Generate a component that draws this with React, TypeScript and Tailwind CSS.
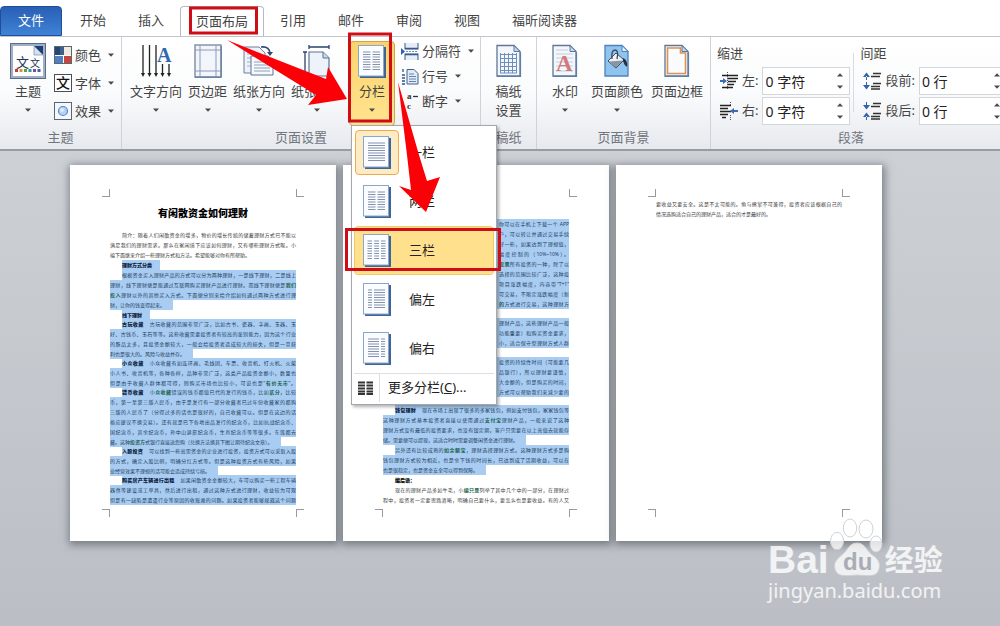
import { Fragment, type ReactNode } from 'react';

const FONT = "font-['Noto_Sans','Noto_Sans_CJK_SC',sans-serif]";

interface Para {
  lead?: string;
  lines: string[];
  plain?: boolean;
  flush?: boolean; // no first line indent
  runsOn?: boolean; // last line is full width too
}

// ~text~ marks words flagged by the grammar check
const pageOne: Para[] = [
  {
    plain: true,
    lines: [
      '简介：随着人们闲散资金的增多，物价的增长传统的储蓄理财方式已不能以',
      '满足我们的理财需求。那么在家闲境下应该如何理财，又有哪些理财方式呢。小',
      '编下面继来介绍一些理财方式和方法。希望能够对你有所帮助。',
    ],
  },
  { lead: '理财方式分类', lines: [''] },
  {
    lines: [
      '根据资金买入理财产品的方式可以分为两种理财，一是线下理财，二是线上',
      '理财，线下理财便是能通过互联网购买理财产品进行理财。而线下理财便是~我们~',
      '~投入~理财以外的其他买入方式。下面便分别来给介绍如何通过两种方式进行理',
      '财，让你的钱变得起来。',
    ],
  },
  { lead: '线下理财', lines: [''] },
  {
    lead: '古玩收藏',
    lines: [
      '古玩收藏的范围非常广泛，比如古书、瓷器、字画、玉器、玉',
      '好、古钱币、玉石等等。这些收藏需要投资者有较高的鉴别能力，因为这个行业',
      '的赝品太多，且投资金额较大，一般会给投资者造成较大的损失，但是一旦获',
      '利也是很大的。风险与收益并存。',
    ],
  },
  {
    lead: '小众收藏',
    lines: [
      '小众收藏有如连环画、毛线团、车票、收音机、打火机、火柴',
      '小人书、收音机等，各种各样，品种非常广泛，这类产品投资金额小，数量也',
      '但是由于收藏人群体都可得，则购买市场也比较小，可说也是“~有价无市~”。',
    ],
    runsOn: true,
  },
  {
    lead: '错币收藏',
    lines: [
      '小~众收藏~错误的钱币都值已代的发行的钱币，比如~贰分~，比较',
      '币，第一至第三版人民币，由于是发行有一部分收藏者已过年份收藏家的都购',
      '三版的人民币了（分得过多的话也是很好的，自己收藏可以。但是在这边的话',
      '格应建议不换交易）。还有就是已下各地出品发行的纪念币，比如抗战纪念币、',
      '国纪念币，其余纪念币，孙中山诞辰纪念币，生肖纪念币等等很多。东莲都去',
      '藏。这种~投资方~式银行直接送您购（兑换方法换其下图让期待纪念文章）。',
    ],
  },
  {
    lead: '入股投资',
    lines: [
      '可以找到一些高需资金的企业进行投资，投资方式可以采取入股',
      '的方式，确定入股比例，明确分红方式等。但是这种投资方式有些风险，如果',
      '业经营效果不理想的话可能会造成持续亏损。',
    ],
  },
  {
    lead: '购买房产车辆进行出租',
    lines: [
      '如果闲散资金金额较大，车可以购买一些工程车辆',
      '器然等建设或工单具，然后进行出租，通过这种方式进行理财，收益较为可观',
      '但是有一缺陷是遭遇行业等原因的收账难的问题。如果投资者能够规避这个问题',
    ],
    runsOn: true,
  },
];

// the open menu covers the left part of these lines; '' is an empty line
const pageTwoTop = [
  '你可以在手机上下载一个 APP',
  '户，可以转让并通过交易手续',
  '好一些，如果达到了理想值，',
  '幅度控制的（10%~10%）。',
  '~股票~所有投资的一种，除了以',
  '选择的范围比较广泛，这种投',
  '项目涨跌幅度，内容带“T+1”',
  '可交易，不限定涨跌幅度（新',
  '~的~方式进行交易，这种理财方',
  '',
  '理财产品，这些理财产品一般',
  '功能重要）和购买资金要求，',
  '小，适合保守型理财方式人群',
  '',
  '投资的持续性时间（可能要几',
  '品银行），所以理财要谨慎，',
  '大金额的，但是购买的时间，',
  '方式可以帮助我们来减少要的',
];

const pageTwo: Para[] = [
  {
    lead: '钱包理财',
    lines: [
      '现在市场上出现了很多的多家钱包，例如支付钱包，家家钱包等',
      '这种理财方式基本投资者直接以使用通过~支付宝~理财产品，一般来说了这种',
      '理财方式没有最低的投资要求，也没有锁定期，客户只需要在以上充值去就能存',
      '储。需要便可以提现，这适合时时需要调整闲资金进行理财。',
    ],
  },
  {
    lines: [
      '另外还有比较成熟的~如余额宝~，理财选择理财方式。这种理财方式多是购',
      '钱包理财方式较为相近，也是余下钱的时间长，已达到成了活期收益，可以在',
      '也是很稳定，也是资金安全可以得到保障。',
    ],
  },
  { plain: true, lead: '编后语：', lines: [''] },
  {
    plain: true,
    lines: [
      '现在的理财产品多如牛毛，小~编只是~列举了其中几个中的一部分，在理财过',
      '程中，投资者一定要思路清晰，明确自己要什么，要怎么也是要收益。有的人又',
    ],
    runsOn: true,
  },
];

const pageThree: Para[] = [
  {
    plain: true,
    flush: true,
    lines: [
      '要收益又要安全。这是不太可能的。鱼与熊掌不可兼得，投资者应该根据自己的',
      '情况选购适合自己的理财产品，适合的才是最好的。',
    ],
  },
];

function Marked({ text }: { text: string }) {
  return (
    <>
      {text.split('~').map((part, i) =>
        i % 2 ? (
          <span key={i} className="font-bold text-[#17614f]">{part}</span>
        ) : (
          <Fragment key={i}>{part}</Fragment>
        ),
      )}
    </>
  );
}

function Paragraph({ para }: { para: Para }) {
  return (
    <div className={para.lead && para.lines[0] ? '-mt-px' : ''}>
      {para.lines.map((line, i) => {
        const full = i < para.lines.length - 1 || para.runsOn;
        return (
          <p
            key={i}
            className={`h-[10px] whitespace-nowrap ${para.plain ? 'text-[#3a3a3a]' : 'bg-[#a9cdf2] text-[#233c5c]'} ${
              full ? '[text-align-last:justify]' : 'w-fit pr-2'
            } ${i === 0 && !para.flush ? 'ml-3' : ''}`}
          >
            {i === 0 && para.lead && (
              <b className={`font-black ${para.plain ? 'text-black' : 'text-[#0d2340]'} ${line ? 'mr-1.5' : ''}`}>
                {para.lead}
              </b>
            )}
            <Marked text={line} />
          </p>
        );
      })}
    </div>
  );
}

function CoveredLines({ lines }: { lines: string[] }) {
  return (
    <div className="pb-[9px]">
      {lines.map((line, i) => (
        <p key={i} className={line ? 'flex h-[10px] justify-end bg-[#a9cdf2] text-[#233c5c]' : 'h-[9px]'}>
          {line && (
            <span className="block w-[70px] whitespace-nowrap [text-align-last:justify]">
              {line.includes('%') ? line : <Marked text={line} />}
            </span>
          )}
        </p>
      ))}
    </div>
  );
}

function Page({ title, paras, covered, className }: { title?: string; paras: Para[]; covered?: string[]; className: string }) {
  return (
    <article className="flex h-[376px] w-[266px] shrink-0 flex-col bg-white px-8 py-6 shadow-[1px_2px_8px_2px_rgba(70,76,84,0.6)]">
      <div className="flex justify-between">
        <i className="size-2 border-r border-b border-[#9a9a9a]" />
        <i className="size-2 border-b border-l border-[#9a9a9a]" />
      </div>
      <div className={`flex-1 px-2 text-[5px] leading-[10px] ${className}`}>
        {title && <h1 className="mb-[9px] text-center text-[10px] leading-4 font-black text-black">{title}</h1>}
        {covered && <CoveredLines lines={covered} />}
        {paras.map((para, i) => (
          <Paragraph key={i} para={para} />
        ))}
      </div>
      <div className="flex justify-between">
        <i className="size-2 border-t border-r border-[#9a9a9a]" />
        <i className="size-2 border-t border-l border-[#9a9a9a]" />
      </div>
    </article>
  );
}

/* ---------- icons ---------- */

function Sheet({ children, stroke = '#5f7796' }: { children?: ReactNode; stroke?: string }) {
  return (
    <svg width="28" height="34" viewBox="0 0 28 34">
      <path d="M2 1.5h17l6 6v24.500h-23z" fill="#f3f7fd" stroke={stroke} strokeWidth="1.300" />
      {children}
      <path d="M19 1.500v6h6z" fill="#c5d8f0" stroke={stroke} />
      <path d="M2 32.500h23.500v-24" fill="none" stroke="#5d7fa8" strokeWidth="1.200" />
    </svg>
  );
}

function ThemeIcon() {
  return (
    <svg width="36" height="36" viewBox="0 0 36 36">
      <rect x=".5" y=".5" width="35" height="35" fill="#9fb0c6" stroke="#5a6c88" />
      <path d="M3 3h21l9 9v21H3z" fill="#fdfdfe" />
      <path d="M24 3h9v9z" fill="#1d3f74" />
      <path d="M24 3v9h9z" fill="#d6e0ee" stroke="#6b80a3" strokeWidth=".6" />
      <text x="6" y="24" fontSize="13" fill="#23364f">文</text>
      <text x="20" y="24" fontSize="10" fill="#23364f">文</text>
      {['#c23b3b', '#d99530', '#5fa046', '#3c8f9e', '#7450a0', '#3a62a8'].map((c, i) => (
        <rect key={c} x={5 + i * 4.500} y="26" width="3" height="3" fill={c} />
      ))}
    </svg>
  );
}

function ColorsIcon() {
  return (
    <svg width="18" height="18" viewBox="0 0 18 18">
      <rect x=".5" y=".5" width="17" height="17" fill="#fff" stroke="#5b6673" />
      <rect x="1" y="1" width="5" height="8" fill="#27466f" />
      <rect x="6" y="1" width="4" height="8" fill="#3d6290" />
      <rect x="10" y="1" width="7" height="8" fill="#efebdf" />
      <rect x="1" y="10" width="8" height="7" fill="#5080c0" />
      <rect x="10" y="10" width="7" height="7" fill="#c8443c" />
    </svg>
  );
}

function FontsIcon() {
  return (
    <svg width="18" height="18" viewBox="0 0 18 18">
      <rect x=".5" y=".5" width="17" height="17" fill="#fff" stroke="#4a4f57" />
      <text x="2" y="14" fontSize="14" fontWeight="500" fill="#111">文</text>
    </svg>
  );
}

function EffectsIcon() {
  return (
    <svg width="18" height="18" viewBox="0 0 18 18">
      <rect x=".5" y=".5" width="17" height="17" fill="#f4f7fb" stroke="#5b6673" />
      <circle cx="9" cy="9" r="4.500" fill="#b4d2f6" stroke="#5c86c4" strokeWidth="1.200" />
      <circle cx="8" cy="8" r="2" fill="#dcebfd" />
    </svg>
  );
}

function TextDirectionIcon() {
  return (
    <svg width="34" height="34" viewBox="0 0 34 34">
      <path d="M4 1v30M10.500 1v30M17 1v30M23.500 20v11M30 20v11" stroke="#222" strokeWidth="1.300" />
      <path d="M2 29h4l-2 4zM8.500 29h4l-2 4zM15 29h4l-2 4zM21.500 29h4l-2 4zM28 29h4l-2 4z" fill="#222" />
      <text x="18" y="18" fontSize="20" fontWeight="700" fill="#2f67b1" className="font-['Liberation_Serif',serif]">A</text>
    </svg>
  );
}

function MarginsIcon() {
  return (
    <svg width="28" height="34" viewBox="0 0 28 34">
      <rect x="1" y="1" width="26" height="32" fill="#f2f6fc" stroke="#72839a" strokeWidth="1.300" />
      <path d="M6 1v32M22 1v32M1 6h26M1 27h26" stroke="#8c9cb2" />
      <path d="M1 33.200h26.200V2" fill="none" stroke="#58749a" />
    </svg>
  );
}

function OrientationIcon() {
  return (
    <svg width="32" height="34" viewBox="0 0 32 34">
      <path d="M1 3h15l6 6v20H1z" fill="#eef3fb" stroke="#6d7f99" />
      <path d="M4 10h6M4 14h4M4 18h4M4 22h4" stroke="#a4b0c2" />
      <path d="M8 12h17l5 5v14H8z" fill="#f6f9fe" stroke="#5e7391" />
      <path d="M11 18h16M11 21h16M11 24h16M11 27h16" stroke="#8fa0b8" />
      <path d="M18 3q8-1 9 6" fill="none" stroke="#2e4a77" strokeWidth="1.500" />
      <path d="M24 8h6l-3 4z" fill="#2e4a77" />
    </svg>
  );
}

function PaperSizeIcon() {
  return (
    <svg width="30" height="34" viewBox="0 0 30 34">
      <path d="M7 8h14l6 6v18H7z" fill="#eef3fb" stroke="#5e7391" strokeWidth="1.200" />
      <path d="M21 8v6h6" fill="#c9d8ee" stroke="#5e7391" />
      <path d="M7 3h20M7 1v4M27 1v4M3 8v24M1 8h4M1 32h4" stroke="#2d4470" strokeWidth="1.300" />
    </svg>
  );
}

const columnLayouts: Record<string, [number, number][]> = {
  one: [[5, 22]],
  two: [[5, 12.500], [14.500, 22]],
  three: [[4.500, 9], [11.200, 16], [18, 22.500]],
  left: [[5, 9], [11, 22]],
  right: [[5, 16], [18, 22]],
};

function ColumnsIcon({ layout }: { layout: string }) {
  return (
    <svg width="28" height="33" viewBox="0 0 28 33">
      <rect x="2" y="2" width="26" height="31" fill="#3e6595" />
      <rect x=".5" y=".5" width="25" height="30.500" fill="#fafcff" stroke="#8aa6cb" />
      {columnLayouts[layout].map(([from, to]) => (
        <path
          key={from}
          d={[7, 9.500, 12, 14.500, 17, 19.500, 22, 24.500].map((y) => `M${from} ${y}H${to}`).join('')}
          stroke="#8492ad"
          strokeWidth="1.200"
        />
      ))}
    </svg>
  );
}

function BreaksIcon() {
  return (
    <svg width="18" height="17" viewBox="0 0 18 17">
      <path d="M4 0v6h13V0M4 17v-6h13v6" fill="#e4edf8" stroke="#5676a0" strokeWidth="1.200" />
      <path d="M4 5.500h13M4 11.500h13" stroke="#375a8b" strokeWidth="1.500" />
      <path d="M0 5l4 3.500L0 12z" fill="#2b62b3" />
      <path d="M5 8.500h12" stroke="#7d8ea6" strokeDasharray="2 1" />
    </svg>
  );
}

function LineNumbersIcon() {
  return (
    <svg width="18" height="17" viewBox="0 0 18 17">
      <path d="M6 1.500h7l4 4V16H6z" fill="#dfeaf8" stroke="#42618c" />
      <path d="M8 6h5M8 8.500h7M8 11h7M8 13.500h7" stroke="#6a84a8" />
      <path d="M2 1v3M1 7h3M1 10h3M1 13h3M1 16h3" stroke="#27548f" strokeWidth="1.300" />
    </svg>
  );
}

function HyphenIcon() {
  return (
    <svg width="18" height="20" viewBox="0 0 18 20" fontSize="9" fontWeight="700" fill="#333" className="font-['Liberation_Serif',serif]">
      <text x="6" y="8">a</text>
      <text x="6" y="18">c</text>
      <path d="M12 5.500h5" stroke="#333" strokeWidth="1.300" />
    </svg>
  );
}

function GridPaperIcon() {
  return (
    <Sheet>
      <path d="M5 10.500h17M5 14.500h17M5 18.500h17M5 22.500h17M5 26.500h17M5 29h17M5.500 9v20M9.500 9v20M13.500 9v20M17.500 9v20M21.500 9v20" stroke="#6f8fbb" />
    </Sheet>
  );
}

function WatermarkIcon() {
  return (
    <Sheet>
      <path d="M5 6h12M5 10h17M5 14h17M5 18h17M5 22h17M5 27h17" stroke="#c5ccd8" />
      <text x="5" y="27" fontSize="23" fontWeight="700" fill="#cf7b7b" className="font-['Liberation_Serif',serif]">A</text>
    </Sheet>
  );
}

function PageColorIcon() {
  return (
    <svg width="28" height="34" viewBox="0 0 28 34">
      <path d="M2 1.500h17l6 6v24.500H2z" fill="#8fc3f0" stroke="#4d82bb" strokeWidth="1.300" />
      <path d="M19 1.500v6h6z" fill="#e4f0fb" stroke="#4d82bb" />
      <path d="M13 9l8 7-8 8-8-7z" fill="#eef1f5" stroke="#3c4a5c" />
      <path d="M6 17.500l14-1-7 7z" fill="#8a95a2" />
      <path d="M20 14q5 2 4 9-3-2-4-6z" fill="#25303e" />
      <path d="M9 15q-1-9 3-9t2 9" fill="none" stroke="#3c4a5c" strokeWidth="1.300" />
    </svg>
  );
}

function PageBorderIcon() {
  return (
    <Sheet>
      <path d="M4.500 4h13v5h5v20.500h-18z" fill="#f9fbff" stroke="#dc9452" strokeWidth="1.600" />
    </Sheet>
  );
}

function IndentIcon({ right = false }: { right?: boolean }) {
  return (
    <svg width="18" height="18" viewBox="0 0 18 18">
      {right ? (
        <>
          <path d="M0 3.500h11M0 6.500h8M0 9.500h11M0 12.500h8M2 15.500h4" stroke="#222" strokeWidth="1.500" />
          <path d="M10 9l4-3v2h4v2h-4v2z" fill="#3b6bb5" />
          <path d="M10.500 0v4M10.500 13v5" stroke="#555" strokeDasharray="1 1" />
        </>
      ) : (
        <>
          <path d="M2 3.500h16M7 6.500h11M8 9.500h8M7 12.500h7M2 15.500h11" stroke="#222" strokeWidth="1.500" />
          <path d="M7 9L3 6v2H0v2h3v2z" fill="#3b6bb5" />
          <path d="M7.500 0v18" stroke="#555" strokeDasharray="1 1" />
        </>
      )}
    </svg>
  );
}

function SpacingIcon({ after = false }: { after?: boolean }) {
  return (
    <svg width="18" height="18" viewBox="0 0 18 18">
      <path d="M10 1.500h8M8 4.500h9M10 11.500h8M8 14.500h9M8 17h9" stroke="#333" strokeWidth="1.500" />
      <path d={after ? 'M0 3h7L3.500 7.500zM3 0h1v4H3zM0 15h7l-3.500-4.500zM3 14h1v4H3z' : 'M0 5h7L3.500.5zM3 4h1v4H3zM0 13h7l-3.500 4.500zM3 10h1v4H3z'} fill="#2f62b0" />
    </svg>
  );
}

function Caret({ up = false }: { up?: boolean }) {
  return (
    <svg width="6" height="4" viewBox="0 0 6 4" className="shrink-0">
      <path d={up ? 'M0 3.500h6L3 .2z' : 'M0 .5h6L3 3.800z'} fill="#4a4a4a" />
    </svg>
  );
}

/* ---------- ribbon ---------- */

function BigButton({ icon, label, second, caret = true }: { icon: ReactNode; label: string; second?: string; caret?: boolean }) {
  return (
    <button className="flex shrink-0 flex-col items-center whitespace-nowrap">
      <span className="flex h-9 items-center">{icon}</span>
      <span className="mt-[3px] leading-[18px]">{label}</span>
      {second && <span className="leading-5">{second}</span>}
      {caret && (
        <span className="flex h-5 items-center">
          <Caret />
        </span>
      )}
    </button>
  );
}

function SmallButton({ icon, label }: { icon: ReactNode; label: string }) {
  return (
    <button className="flex items-center gap-[3px] whitespace-nowrap">
      {icon}
      <span className="leading-5">{label}</span>
      <span className="pl-1">
        <Caret />
      </span>
    </button>
  );
}

function Group({ label, className, children }: { label: string; className: string; children: ReactNode }) {
  return (
    <section className={`flex shrink-0 flex-col ${className}`}>
      <div className="flex flex-1">{children}</div>
      <h2 className="pb-[3px] text-center leading-[18px] text-[#71757c]">{label}</h2>
    </section>
  );
}

function SpinField({ id, icon, label, value }: { id: string; icon: ReactNode; label: string; value: string }) {
  return (
    <div className="flex h-7 items-center pl-[3px]">
      {icon}
      <label htmlFor={id} className="px-1 whitespace-nowrap">{label}</label>
      <div className="flex h-7 w-[88px] items-center border border-[#d3d6da] bg-white pr-1.5">
        <input id={id} defaultValue={value} className="w-full min-w-0 pl-0.5 text-[14px] text-[#222] outline-none" />
        <div className="flex flex-col gap-2">
          <button aria-label={`${label} +`} className="flex h-1"><Caret up /></button>
          <button aria-label={`${label} -`} className="flex h-1"><Caret /></button>
        </div>
      </div>
    </div>
  );
}

const columnItems = [
  { layout: 'one', label: '一栏' },
  { layout: 'two', label: '两栏' },
  { layout: 'three', label: '三栏' },
  { layout: 'left', label: '偏左' },
  { layout: 'right', label: '偏右' },
];

function ColumnsMenu() {
  return (
    <div className="absolute top-full left-px w-[146px] border border-[#a3a8af] bg-white p-0.5 text-[#222] shadow-[2px_2px_3px_rgba(0,0,0,0.3)]">
      {columnItems.map(({ layout, label }) => (
        <button
          key={layout}
          className={`flex h-[49px] w-full items-center gap-[10px] rounded-sm border ${
            layout === 'three' ? 'border-[#f3c865] bg-[#ffe18d]' : 'border-transparent'
          }`}
        >
          <span
            className={`flex h-[45px] w-[44px] items-center justify-center rounded-sm border ${
              layout === 'one' ? 'border-[#efaa4e] bg-[#fcebc3]' : 'border-transparent'
            }`}
          >
            <ColumnsIcon layout={layout} />
          </span>
          {label}
        </button>
      ))}
      <button className="flex h-[29px] w-full items-center border-t border-[#dcdfe3]">
        <svg width="15" height="14" viewBox="0 0 15 14" className="mr-1.5 ml-1">
          <path d="M0 1.500h7M0 4.500h7M0 7.500h7M0 10.500h7M0 13h7M8.500 1.500H15M8.500 4.500H15M8.500 7.500H15M8.500 10.500H15M8.500 13H15" stroke="#333" strokeWidth="2" />
        </svg>
        <span className="flex h-full items-center border-l border-[#dcdfe3] pl-2">
          更多分栏(<u>C</u>)...
        </span>
      </button>
    </div>
  );
}

const tabs = ['开始', '插入', '页面布局', '引用', '邮件', '审阅', '视图', '福昕阅读器'];

function Tabs() {
  return (
    <nav className="flex h-[37px] items-end border-b border-[#c2c6cc] bg-white">
      <button className="h-[30px] w-[62px] rounded-t border border-[#1f4f9c] bg-linear-to-b from-[#2a5fb4] to-[#3f83d6] text-white">文件</button>
      <div className="flex pl-0.5">
        {tabs.map((tab) => (
          <button
            key={tab}
            className={`h-[30px] whitespace-nowrap text-[#444] ${
              tab === '页面布局' ? '-mb-px rounded-t border border-b-0 border-[#b4bac3] bg-white px-[15px]' : 'px-4'
            }`}
          >
            {tab}
          </button>
        ))}
      </div>
    </nav>
  );
}

function Ribbon() {
  return (
    <div className="relative z-10 flex h-[114px] border-b-2 border-[#979ca4] bg-linear-to-b from-white via-[#fafbfc] to-[#e6e9ee] text-[#444]">
      <Group label="主题" className="w-[122px] border-r border-[#cfd3d9]">
        <div className="flex gap-2 pt-1.5 pl-2.5">
          <BigButton icon={<ThemeIcon />} label="主题" />
          <div className="flex h-[78px] flex-col justify-between pt-0.5">
            <SmallButton icon={<ColorsIcon />} label="颜色" />
            <SmallButton icon={<FontsIcon />} label="字体" />
            <SmallButton icon={<EffectsIcon />} label="效果" />
          </div>
        </div>
      </Group>
      <Group label="页面设置" className="w-[359px] border-r border-[#cfd3d9]">
        <div className="flex gap-1.5 pl-2">
          <div className="flex gap-1.5 pt-1.5">
            <BigButton icon={<TextDirectionIcon />} label="文字方向" />
            <BigButton icon={<MarginsIcon />} label="页边距" />
            <BigButton icon={<OrientationIcon />} label="纸张方向" />
            <BigButton icon={<PaperSizeIcon />} label="纸张大小" />
          </div>
          <div className="relative mt-1 flex h-[85px] w-[46px] justify-center rounded-sm border border-[#cfa64a] bg-linear-to-b from-[#fbd36c] to-[#ffe48f] pt-px">
            <BigButton icon={<ColumnsIcon layout="two" />} label="分栏" />
            <ColumnsMenu />
          </div>
          <div className="mt-1 flex h-[70px] flex-col justify-between">
            <SmallButton icon={<BreaksIcon />} label="分隔符" />
            <SmallButton icon={<LineNumbersIcon />} label="行号" />
            <SmallButton icon={<HyphenIcon />} label="断字" />
          </div>
        </div>
      </Group>
      <Group label="稿纸" className="w-[56px] border-r border-[#cfd3d9]">
        <div className="flex w-full justify-center pt-1.5">
          <BigButton icon={<GridPaperIcon />} label="稿纸" second="设置" caret={false} />
        </div>
      </Group>
      <Group label="页面背景" className="w-[174px] border-r border-[#cfd3d9]">
        <div className="flex w-full justify-end gap-2 pt-1.5 pr-[7px]">
          <div className="pr-1">
            <BigButton icon={<WatermarkIcon />} label="水印" />
          </div>
          <BigButton icon={<PageColorIcon />} label="页面颜色" />
          <BigButton icon={<PageBorderIcon />} label="页面边框" caret={false} />
        </div>
      </Group>
      <Group label="段落" className="w-[280px]">
        <div className="flex flex-col gap-0.5 pt-1 pr-[3px] pl-1.5">
          <h3 className="leading-6">缩进</h3>
          <SpinField id="indent-left" icon={<IndentIcon />} label="左:" value="0 字符" />
          <SpinField id="indent-right" icon={<IndentIcon right />} label="右:" value="0 字符" />
        </div>
        <div className="my-4 border-l border-[#d8dbe0]" />
        <div className="flex flex-col gap-0.5 pt-1 pl-1.5">
          <h3 className="leading-6">间距</h3>
          <SpinField id="space-before" icon={<SpacingIcon />} label="段前:" value="0 行" />
          <SpinField id="space-after" icon={<SpacingIcon after />} label="段后:" value="0 行" />
        </div>
      </Group>
    </div>
  );
}

/* ---------- overlays ---------- */

function Annotations() {
  return (
    <svg width="1000" height="626" viewBox="0 0 1000 626" className="pointer-events-none absolute top-0 left-0 z-20">
      <g fill="none" stroke="#cf0d16" strokeWidth="3">
        <rect x="190.500" y="8" width="66" height="25" />
        <rect x="349.500" y="34" width="41" height="87" />
        <rect x="346.500" y="229.500" width="153" height="40" />
      </g>
      <g fill="#fb0007">
        <path d="M227 40L326 79L328 67L347 99L308 105L316 95Z" />
        <path d="M398 82L419 155L427 181L440 177L426 212L399 186L411 190L407 155Z" />
      </g>
    </svg>
  );
}

function BaiduMark() {
  return (
    <div className="pointer-events-none absolute top-[518px] left-[768px] z-20 text-white/80">
      <div className="flex items-end">
        <span className="font-['Liberation_Sans',sans-serif] text-[39px] leading-9 font-bold">Bai</span>
        <svg width="56" height="60" viewBox="0 0 56 60">
          <g fill="#fff" fillOpacity=".75" stroke="#cfd1d4" strokeWidth="1">
            <ellipse cx="8" cy="23" rx="6.500" ry="8.700" />
            <ellipse cx="21" cy="10" rx="6.700" ry="9" />
            <ellipse cx="37" cy="11" rx="7" ry="9" />
            <ellipse cx="47" cy="26" rx="6" ry="8" />
            <path d="M28 25C35 25 37 31 42 36C48 40 52 44 50 51C48 59 41 58 28 57C16 58 8 59 6 51C4 44 9 40 14 36C19 31 21 25 28 25Z" />
          </g>
          <text x="14" y="52" fontSize="24" fontWeight="700" fill="#a9adb3" className="font-['Liberation_Sans',sans-serif]">du</text>
        </svg>
        <span className="text-[29px] leading-9 font-bold">经验</span>
      </div>
      <div className="font-['Noto_Sans',sans-serif] text-[20px] leading-[26px]">jingyan.baidu.com</div>
    </div>
  );
}

export default function App() {
  return (
    <div className={`relative flex min-h-screen flex-col overflow-hidden text-[13px] ${FONT}`}>
      <Tabs />
      <Ribbon />
      <main className="flex flex-1 items-start gap-[7px] bg-linear-to-b from-[#cdd1d6] to-[#bbbfc5] pt-3.5 pl-[70px]">
        <Page title="有闲散资金如何理财" paras={pageOne} className="pt-2" />
        <Page covered={pageTwoTop} paras={pageTwo} className="pt-[22px]" />
        <Page paras={pageThree} className="pt-0.5" />
      </main>
      <Annotations />
      <BaiduMark />
    </div>
  );
}
